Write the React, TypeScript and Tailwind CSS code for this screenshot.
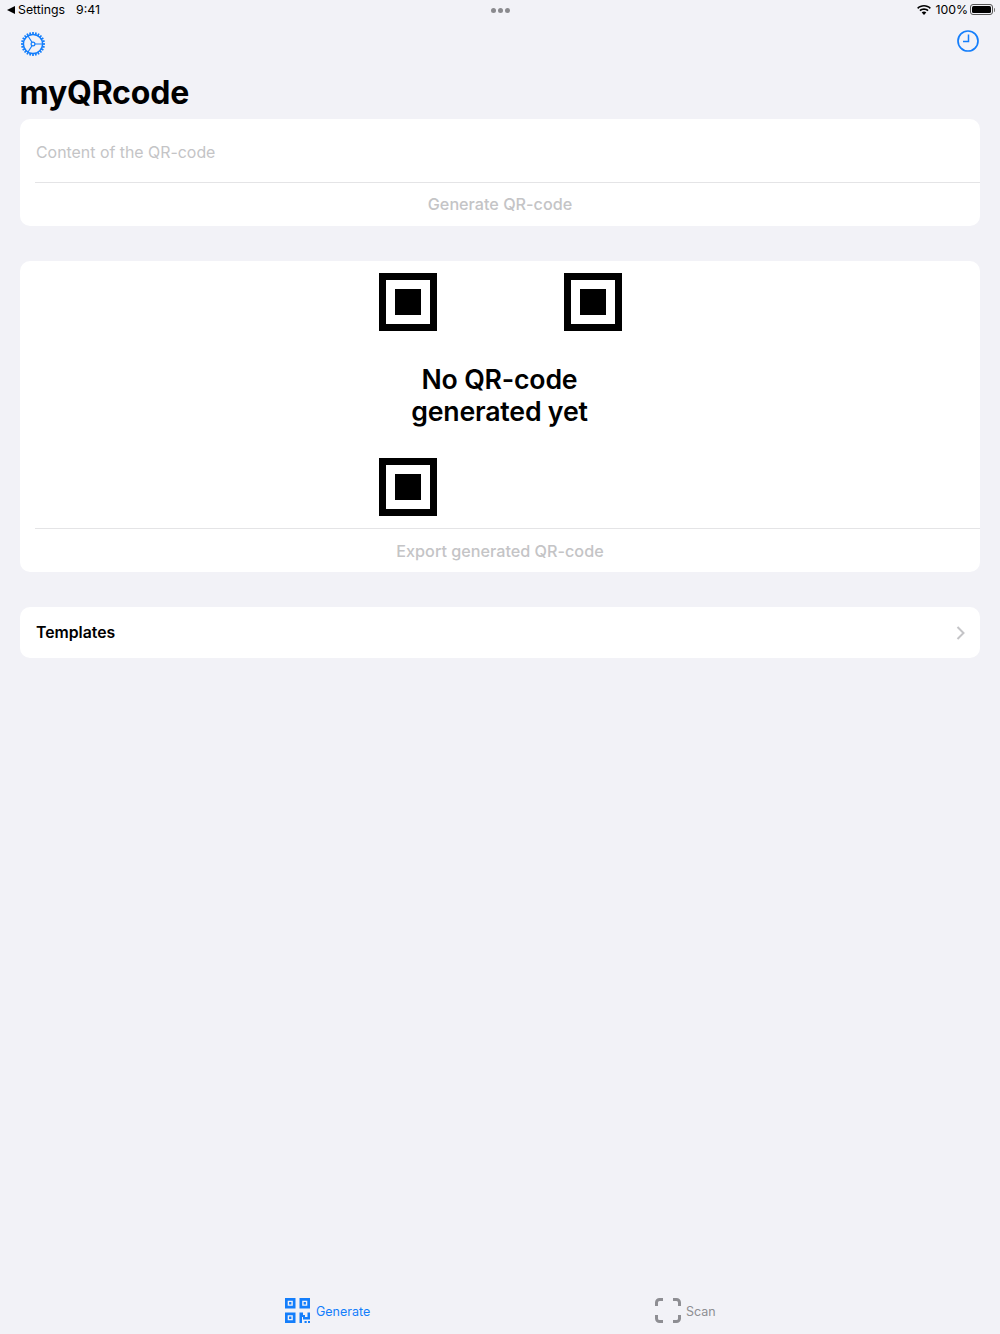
const BLUE = '#147efb'

function Finder() {
  return (
    <div className="w-[58px] h-[58px] border-[7px] border-black flex items-center justify-center">
      <div className="w-[26px] h-[26px] bg-black" />
    </div>
  )
}

function GearIcon() {
  const teeth = Array.from({ length: 24 }, (_, i) => i * 15)
  return (
    <svg width="26" height="26" viewBox="0 0 26 26" fill="none" stroke={BLUE}>
      <circle cx="13" cy="13" r="9.6" strokeWidth="1.5" />
      {teeth.map((a) => (
        <line key={a} x1="13" y1="1" x2="13" y2="3.6" strokeWidth="1.7" transform={`rotate(${a} 13 13)`} />
      ))}
      <circle cx="13" cy="13" r="1.9" strokeWidth="1.2" />
      <path d="M15 13h8M12 11.300 8 5M12 14.700 8 21" strokeWidth="1.200" />
    </svg>
  )
}

function ClockIcon() {
  return (
    <svg width="22" height="22" viewBox="0 0 22 22" fill="none" stroke={BLUE} strokeWidth="1.700">
      <circle cx="11" cy="11" r="10" />
      <path d="M11.500 4.500v7h-5.500" strokeWidth="1.500" />
    </svg>
  )
}

function WifiIcon() {
  return (
    <svg width="14" height="10" viewBox="0 0 14 10" fill="#000">
      <path d="M7 0c2.700 0 5.100 1 6.900 2.700l-1.100 1.200C11.300 2.500 9.300 1.600 7 1.600s-4.300.9-5.800 2.300L.1 2.700C1.900 1 4.300 0 7 0z" />
      <path d="M7 3.300c1.800 0 3.400.7 4.600 1.800l-1.100 1.200C9.600 5.500 8.400 5 7 5s-2.600.5-3.500 1.300L2.400 5.100C3.600 4 5.200 3.300 7 3.300z" />
      <path d="M7 6.500c.9 0 1.700.3 2.300.9L7 9.900 4.700 7.400c.6-.6 1.400-.9 2.300-.9z" />
    </svg>
  )
}

function BatteryIcon() {
  return (
    <div className="-ml-[2px] flex items-center">
      <div className="w-[23px] h-[11px] rounded-[3px] border border-[#555] p-[1px]">
        <div className="w-full h-full rounded-[1.5px] bg-black" />
      </div>
      <div className="w-[1.5px] h-[4px] ml-[0.5px] rounded-r-sm bg-[#777]" />
    </div>
  )
}

function QrTabIcon() {
  return (
    <svg width="25" height="25" viewBox="0 0 25 25" fill={BLUE}>
      <path fillRule="evenodd" d="M0 0h10.500v10.500H0zM2.700 2.700v5.100h5.100V2.700zM14.500 0H25v10.500H14.500zM17.200 2.700v5.100h5.100V2.700zM0 14.500h10.500V25H0zM2.700 17.200v5.100h5.100v-5.100z" />
      <path d="M4.100 4.100h2.300v2.300H4.100zM18.600 4.100h2.300v2.300h-2.300zM4.100 18.600h2.300v2.300H4.100z" />
      <path d="M14.500 14.500h3.500v2.500h2v2h2.500v-4.500H25v7h-7v-2.500h-1V25h-2.500z" />
      <path d="M19.500 23h2.200v2h-2.200zM23 23h2v2h-2z" />
    </svg>
  )
}

function ScanIcon() {
  return (
    <svg width="26" height="25" viewBox="0 0 26 25" fill="none" stroke="#8e8e93" strokeWidth="3">
      <path d="M1.500 8V4.500a3 3 0 0 1 3-3H8M18 1.500h3.500a3 3 0 0 1 3 3V8M24.500 17v3.500a3 3 0 0 1-3 3H18M8 23.500H4.500a3 3 0 0 1-3-3V17" />
    </svg>
  )
}

export default function App() {
  return (
    <div className="w-[1000px] h-[1334px] flex flex-col bg-[#f2f2f7] text-black font-['Inter','Liberation_Sans',sans-serif]">
      {/* Status bar */}
      <div className="h-5 shrink-0 pl-[7px] pr-[5px] grid grid-cols-3 items-center text-[12.3px] leading-none">
        <div className="flex items-center">
          <svg width="8" height="8" viewBox="0 0 8 8" fill="#000" className="mr-[3px]">
            <path d="M0 4 8 0v8z" />
          </svg>
          <span>Settings</span>
          <span className="ml-[11px]">9:41</span>
        </div>
        <div className="flex justify-center gap-[2px]">
          <div className="w-[5px] h-[5px] rounded-full bg-[#8a8a8e]" />
          <div className="w-[5px] h-[5px] rounded-full bg-[#8a8a8e]" />
          <div className="w-[5px] h-[5px] rounded-full bg-[#8a8a8e]" />
        </div>
        <div className="flex items-center justify-end gap-[4px]">
          <WifiIcon />
          <span>100%</span>
          <BatteryIcon />
        </div>
      </div>

      {/* Nav icons */}
      <div className="h-[42px] shrink-0 pl-5 pr-[21px] flex justify-between items-start">
        <div className="mt-[11px]"><GearIcon /></div>
        <div className="mt-[10px]"><ClockIcon /></div>
      </div>

      <h1 className="ml-[19.5px] h-[57px] shrink-0 pt-[11px] text-[32px] leading-[39px] font-bold tracking-[-0.2px]">myQRcode</h1>

      <div className="flex-1 mx-5 flex flex-col">
        {/* Input card */}
        <div className="h-[107px] bg-white rounded-[10px] flex flex-col">
          <div className="h-[63px] pl-4 pt-1 flex items-center text-[15.9px] text-[#c4c4c6]">Content of the QR-code</div>
          <div className="h-px ml-[15px] bg-[#e4e4e6]" />
          <div className="flex-1 flex items-center justify-center text-[16.2px] font-medium text-[#c4c4c6]">Generate QR-code</div>
        </div>

        {/* QR preview card */}
        <div className="mt-[35px] h-[311px] bg-white rounded-[10px] flex flex-col">
          <div className="w-[243px] h-[243px] mx-auto mt-3 flex flex-col justify-between">
            <div className="flex justify-between">
              <Finder />
              <Finder />
            </div>
            <div className="pt-px pr-px text-center text-[26.7px] leading-[32.5px] font-semibold -tracking-[0.2px]">
              No QR-code<br />generated yet
            </div>
            <div className="flex">
              <Finder />
            </div>
          </div>
          <div className="mt-3 h-px ml-[15px] bg-[#e4e4e6]" />
          <div className="flex-1 pt-[2px] flex items-center justify-center text-[16.2px] font-medium text-[#c4c4c6]">Export generated QR-code</div>
        </div>

        {/* Templates row */}
        <div className="mt-[35px] h-[51px] pl-4 pr-[15px] bg-white rounded-[10px] flex items-center justify-between">
          <span className="pt-px text-[15.8px] font-semibold">Templates</span>
          <svg width="9" height="14" viewBox="0 0 9 14" fill="none" stroke="#c4c4c7" strokeWidth="2">
            <path d="M1.500 1 7.500 7l-6 6" />
          </svg>
        </div>
      </div>

      {/* Tab bar */}
      <div className="h-[50px] shrink-0 flex">
        <div className="w-1/2 pl-[285px] pt-[14px] flex items-start">
          <QrTabIcon />
          <span className="ml-[6px] mt-[6px] text-[12.5px] leading-4 text-[#147efb]">Generate</span>
        </div>
        <div className="w-1/2 pl-[155px] pt-[14px] flex items-start">
          <ScanIcon />
          <span className="ml-[5px] mt-[6px] text-[12.5px] leading-4 text-[#8e8e93]">Scan</span>
        </div>
      </div>
    </div>
  )
}
